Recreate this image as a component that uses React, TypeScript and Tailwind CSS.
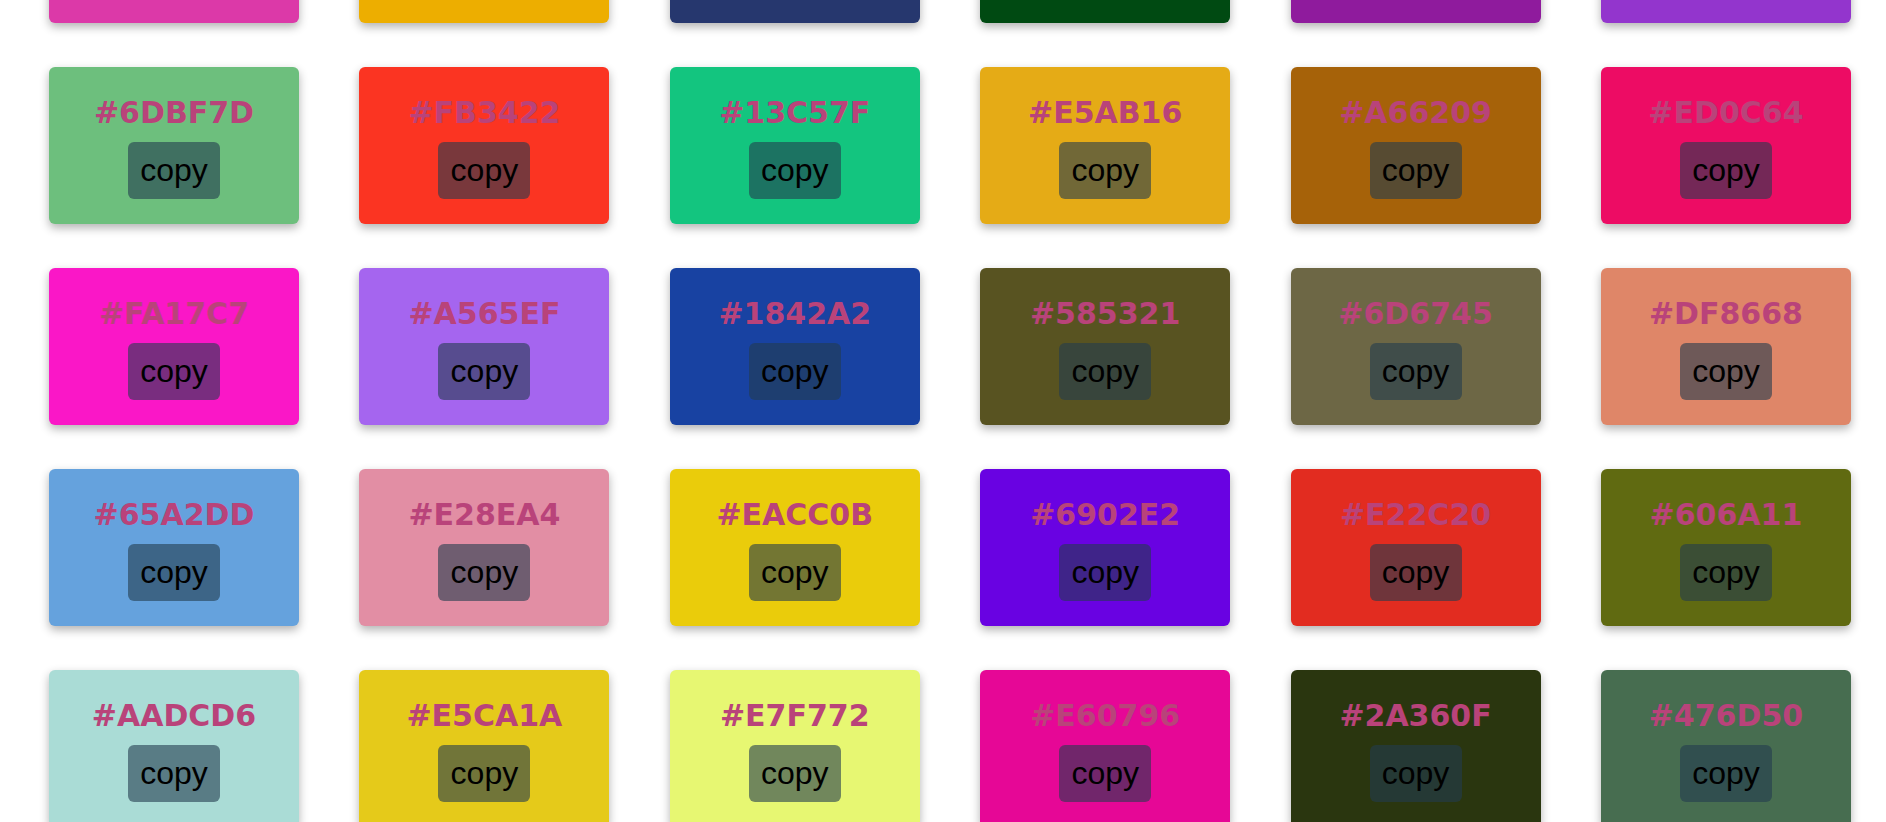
import React from "react";

const colors: string[] = [
  "#DC39A8", "#EDAE00", "#26376E", "#004A12", "#8F1B9D", "#9335CD",
  "#6DBF7D", "#FB3422", "#13C57F", "#E5AB16", "#A66209", "#ED0C64",
  "#FA17C7", "#A565EF", "#1842A2", "#585321", "#6D6745", "#DF8668",
  "#65A2DD", "#E28EA4", "#EACC0B", "#6902E2", "#E22C20", "#606A11",
  "#AADCD6", "#E5CA1A", "#E7F772", "#E60796", "#2A360F", "#476D50",
];

const ColorCard = ({ hex }: { hex: string }) => {
  const copyHex = () => {
    navigator.clipboard?.writeText(hex).catch(() => {});
  };

  return (
    <div
      className="h-[157px] w-[250px] rounded-[6px] shadow-[0_4px_10px_rgba(0,0,0,0.3)] flex flex-col items-center pt-[28px]"
      style={{ backgroundColor: hex }}
    >
      <h2 className="font-['DejaVu_Sans',sans-serif] font-bold text-[30px] leading-[35px] text-[#b9437a]">
        {hex}
      </h2>
      <button
        onClick={copyHex}
        className="mt-[12px] h-[57px] w-[92px] rounded-[6px] bg-[rgba(35,60,78,0.6)] text-black font-['Liberation_Sans',Arial,sans-serif] text-[32px] leading-none pb-[2px]"
      >
        copy
      </button>
    </div>
  );
};

export default function App() {
  return (
    <div className="h-screen overflow-hidden bg-white">
      <div className="-mt-[134px] grid grid-cols-[repeat(6,250px)] justify-between gap-y-[44px] pl-[49px] pr-[35px]">
        {colors.map((c, i) => (
          <ColorCard key={i} hex={c} />
        ))}
      </div>
    </div>
  );
}
